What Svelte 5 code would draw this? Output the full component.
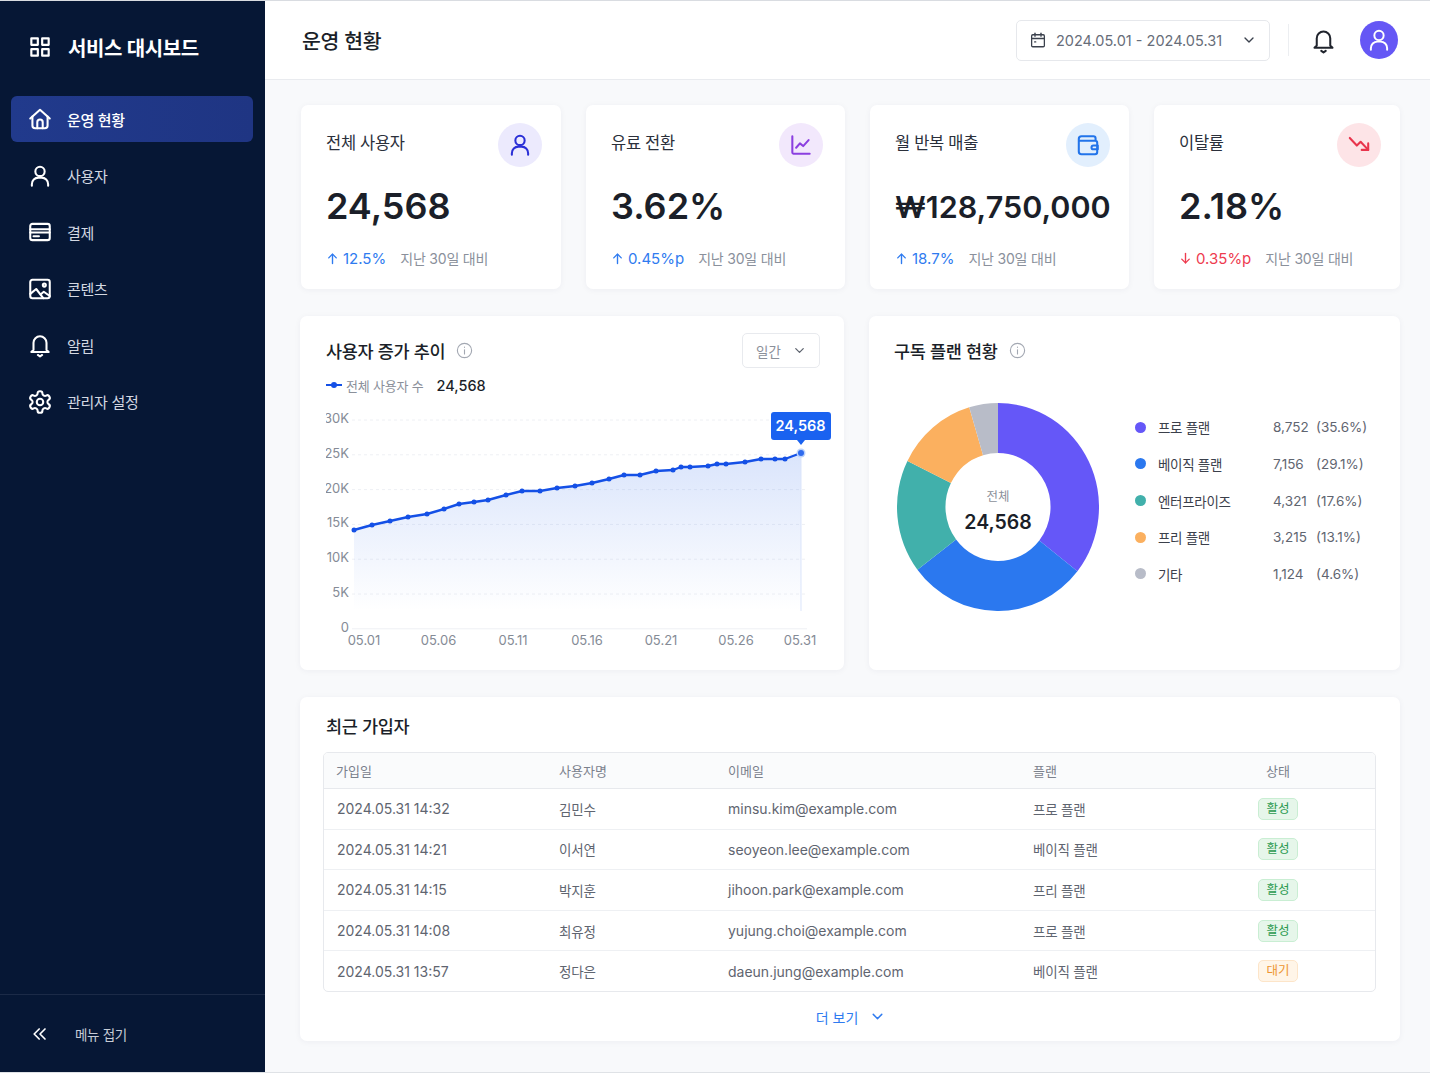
<!--
	Service dashboard
	Sidebar, KPI cards, user growth chart, plan donut and recent signups
-->
<script>
	const icons = {
		grid: ['M4 4h6v6H4z', 'M14 4h6v6h-6z', 'M4 14h6v6H4z', 'M14 14h6v6h-6z'],
		home: ['M3 11.5 12 3.5l9 8', 'M5 9.8V18a2.5 2.5 0 0 0 2.5 2.5h9A2.5 2.5 0 0 0 19 18V9.8', 'M9.5 20.5V15a2.5 2.5 0 0 1 5 0v5.5'],
		user: ['M12 3.5a4.3 4.3 0 1 0 0 8.6 4.3 4.3 0 0 0 0-8.6z', 'M4.5 21v-1.5a6 6 0 0 1 6-6h3a6 6 0 0 1 6 6V21'],
		card: ['M5 4.5h14a2 2 0 0 1 2 2v11a2 2 0 0 1-2 2H5a2 2 0 0 1-2-2v-11a2 2 0 0 1 2-2z', 'M3 9.5h18', 'M3 12.5h18', 'M6 16h5'],
		image: ['M5 3.5h14a2 2 0 0 1 2 2v13a2 2 0 0 1-2 2H5a2 2 0 0 1-2-2v-13a2 2 0 0 1 2-2z', 'M16 7a1.4 1.4 0 1 0 0 2.8A1.4 1.4 0 0 0 16 7z', 'M3 16.5 8.5 12l6.5 8.5', 'M12.5 17l3-2.5 5.5 4'],
		bell: ['M6 16.5V10a6 6 0 0 1 12 0v6.5l2 2H4z', 'M10 21.2 12 22.6l2-1.4'],
		gear: ['M12.22 2h-.44a2 2 0 0 0-2 2v.18a2 2 0 0 1-1 1.73l-.43.25a2 2 0 0 1-2 0l-.15-.08a2 2 0 0 0-2.73.73l-.22.38a2 2 0 0 0 .73 2.73l.15.1a2 2 0 0 1 1 1.72v.51a2 2 0 0 1-1 1.74l-.15.09a2 2 0 0 0-.73 2.73l.22.38a2 2 0 0 0 2.73.73l.15-.08a2 2 0 0 1 2 0l.43.25a2 2 0 0 1 1 1.73V20a2 2 0 0 0 2 2h.44a2 2 0 0 0 2-2v-.18a2 2 0 0 1 1-1.73l.43-.25a2 2 0 0 1 2 0l.15.08a2 2 0 0 0 2.73-.73l.22-.39a2 2 0 0 0-.73-2.73l-.15-.08a2 2 0 0 1-1-1.74v-.5a2 2 0 0 1 1-1.74l.15-.09a2 2 0 0 0 .73-2.73l-.22-.38a2 2 0 0 0-2.73-.73l-.15.08a2 2 0 0 1-2 0l-.43-.25a2 2 0 0 1-1-1.73V4a2 2 0 0 0-2-2z', 'M12 9a3 3 0 1 0 0 6 3 3 0 0 0 0-6z'],
		collapse: ['M11 6 5 12l6 6', 'M18 6l-6 6 6 6'],
		chevron: ['M6 9l6 6 6-6'],
		calendar: ['M5 5h14a1.5 1.5 0 0 1 1.5 1.5v13A1.5 1.5 0 0 1 19 21H5a1.5 1.5 0 0 1-1.500-1.500v-13A1.500 1.500 0 0 1 5 5z', 'M3.500 10h17', 'M8 3v4', 'M16 3v4', 'M7.500 14.500h1.500'],
		trend: ['M4 4v15a1 1 0 0 0 1 1h15', 'M7.500 14.500l3.500-4 3 2.500 5-5.500'],
		wallet: ['M19 8V6a2 2 0 0 0-2-2H6a2.500 2.500 0 0 0-2.500 2.500V18A2.500 2.500 0 0 0 6 20.500h12.500A2 2 0 0 0 20.500 18.500V10a2 2 0 0 0-2-2H3.500', 'M21 12.500h-4a1.700 1.700 0 0 0 0 3.500h4z'],
		down: ['M3.500 5.500l6.500 7 3.500-3.500 7 7.500', 'M20.500 10.500v6h-6'],
		up: ['M12 20V5', 'M6 11l6-6 6 6'],
		dn: ['M12 4v15', 'M6 13l6 6 6-6'],
		info: ['M12 3a9 9 0 1 0 0 18 9 9 0 0 0 0-18z', 'M12 11v5.500', 'M12 7.500v.5']
	};

	const nav = [
		{ icon: 'home', label: '운영 현황', active: true },
		{ icon: 'user', label: '사용자' },
		{ icon: 'card', label: '결제' },
		{ icon: 'image', label: '콘텐츠' },
		{ icon: 'bell', label: '알림' },
		{ icon: 'gear', label: '관리자 설정' }
	];

	const stats = [
		{ label: '전체 사용자', value: '24,568', delta: '12.5%', icon: 'user', tone: 'indigo', inset: 19 },
		{ label: '유료 전환', value: '3.62%', delta: '0.45%p', icon: 'trend', tone: 'purple', inset: 22 },
		{ label: '월 반복 매출', value: '₩128,750,000', delta: '18.7%', icon: 'wallet', tone: 'sky', inset: 19, small: true },
		{ label: '이탈률', value: '2.18%', delta: '0.35%p', icon: 'down', tone: 'rose', inset: 19, bad: true }
	];

	// chart points, in the svg's own pixels
	const points = [
		[28, 125], [46, 120], [64, 116], [82, 112], [101, 109], [118, 104], [133, 99], [148, 97], [162, 95], [180, 90],
		[196, 86], [214, 86], [231, 83], [249, 81], [266, 78], [283, 74], [298, 70], [314, 70], [330, 66], [347, 65],
		[355, 62], [364, 62], [382, 61], [391, 59], [400, 59], [419, 57], [435, 54], [449, 54], [459, 54], [475, 48]
	];
	const linePath = points.map(([x, y], i) => `${i ? 'L' : 'M'}${x} ${y}`).join(' ');
	const areaPath = `${linePath} L475 206 L28 206 Z`;
	const yTicks = ['30K', '25K', '20K', '15K', '10K', '5K', '0'];
	const xTicks = [['05.01', 38], ['05.06', 112.500], ['05.11', 187], ['05.16', 261], ['05.21', 335], ['05.26', 410], ['05.31', 474]];

	const plans = [
		{ name: '프로 플랜', count: '8,752', share: 35.6, color: '#6557f8' },
		{ name: '베이직 플랜', count: '7,156', share: 29.1, color: '#2b78ef' },
		{ name: '엔터프라이즈', count: '4,321', share: 17.6, color: '#41b0ab' },
		{ name: '프리 플랜', count: '3,215', share: 13.1, color: '#fbb05f' },
		{ name: '기타', count: '1,124', share: 4.6, color: '#b8bcc8' }
	];

	function polar(r, pct) {
		const a = (pct / 100) * Math.PI * 2;
		return `${(100 + r * Math.sin(a)).toFixed(2)} ${(100 - r * Math.cos(a)).toFixed(2)}`;
	}

	let running = 0;
	const slices = plans.map((p) => {
		const from = running;
		running += p.share;
		const to = from + p.share;
		const large = p.share > 50 ? 1 : 0;
		return {
			color: p.color,
			d: `M${polar(100, from)} A100 100 0 ${large} 1 ${polar(100, to)} L${polar(52, to)} A52 52 0 ${large} 0 ${polar(52, from)} Z`
		};
	});

	const signups = [
		{ date: '2024.05.31 14:32', name: '김민수', email: 'minsu.kim@example.com', plan: '프로 플랜', status: '활성' },
		{ date: '2024.05.31 14:21', name: '이서연', email: 'seoyeon.lee@example.com', plan: '베이직 플랜', status: '활성' },
		{ date: '2024.05.31 14:15', name: '박지훈', email: 'jihoon.park@example.com', plan: '프리 플랜', status: '활성' },
		{ date: '2024.05.31 14:08', name: '최유정', email: 'yujung.choi@example.com', plan: '프로 플랜', status: '활성' },
		{ date: '2024.05.31 13:57', name: '정다은', email: 'daeun.jung@example.com', plan: '베이직 플랜', status: '대기' }
	];
</script>

{#snippet icon(name, size, width = 2)}
	<svg class="icon" viewBox="0 0 24 24" width={size} height={size} stroke-width={width} aria-hidden="true">
		{#each icons[name] as d}
			<path {d} />
		{/each}
	</svg>
{/snippet}

<div class="shell">
	<aside class="sidebar">
		<div class="brand">
			{@render icon('grid', 26)}
			<span>서비스 대시보드</span>
		</div>
		<nav class="nav">
			{#each nav as item}
				<div class="nav-item" class:active={item.active}>
					{@render icon(item.icon, 26, 1.9)}
					<span>{item.label}</span>
				</div>
			{/each}
		</nav>
		<div class="collapse">
			{@render icon('collapse', 20, 2)}
			<span>메뉴 접기</span>
		</div>
	</aside>

	<div class="page">
		<header class="topbar">
			<h1>운영 현황</h1>
			<div class="date-picker">
				{@render icon('calendar', 18, 1.7)}
				<span>2024.05.01 - 2024.05.31</span>
				{@render icon('chevron', 16, 2)}
			</div>
			<div class="divider"></div>
			<div class="bell">{@render icon('bell', 27, 1.8)}</div>
			<div class="avatar">{@render icon('user', 26, 1.8)}</div>
		</header>

		<main class="content">
			<section class="stats">
				{#each stats as stat}
					<article class="card stat" style="padding-right: {stat.inset}px">
						<div class="stat-head">
							<span class="stat-label">{stat.label}</span>
							<span class="stat-icon {stat.tone}">{@render icon(stat.icon, 26, 1.9)}</span>
						</div>
						<div class="stat-value" class:small={stat.small}>{stat.value}</div>
						<div class="stat-foot">
							<span class="delta" class:bad={stat.bad}>
								{@render icon(stat.bad ? 'dn' : 'up', 15, 2.2)}
								{stat.delta}
							</span>
							<span class="muted">지난 30일 대비</span>
						</div>
					</article>
				{/each}
			</section>

			<section class="charts">
				<article class="card growth">
					<div class="card-head">
						<h2>사용자 증가 추이</h2>
						<span class="info">{@render icon('info', 19, 1.4)}</span>
						<div class="range">
							<span>일간</span>
							{@render icon('chevron', 15, 2)}
						</div>
					</div>
					<div class="legend-line">
						<svg width="16" height="8" viewBox="0 0 16 8" aria-hidden="true">
							<path d="M0 4h16" stroke="#1450e6" stroke-width="2" />
							<circle cx="8" cy="4" r="3" fill="#1450e6" />
						</svg>
						<span class="muted-label">전체 사용자 수</span>
						<strong>24,568</strong>
					</div>
					<svg class="plot" width="506" height="250" viewBox="0 0 506 250" role="img" aria-label="사용자 증가 추이">
						<defs>
							<linearGradient id="area" x1="0" y1="0" x2="0" y2="1">
								<stop offset="0" stop-color="#2563eb" stop-opacity="0.17" />
								<stop offset="1" stop-color="#2563eb" stop-opacity="0" />
							</linearGradient>
						</defs>
						{#each yTicks as tick, i}
							<line x1="26" x2="481" y1={15 + i * 34.8} y2={15 + i * 34.8} class="grid" class:base={i === 6} />
							<text x="23" y={14.500 + i * 34.8} class="axis" text-anchor="end" dominant-baseline="middle">{tick}</text>
						{/each}
						{#each xTicks as [tick, x]}
							<text {x} y="240" class="axis" text-anchor="middle">{tick}</text>
						{/each}
						<path d={areaPath} fill="url(#area)" />
						<line x1="475" x2="475" y1="48" y2="206" stroke="#dbe5fb" />
						<path d={linePath} fill="none" stroke="#1450e6" stroke-width="2.400" stroke-linejoin="round" />
						{#each points.slice(0, -1) as [x, y]}
							<circle cx={x} cy={y} r="2.500" fill="#1450e6" />
						{/each}
						<circle cx="475" cy="48" r="4.500" fill="#bcd3fb" />
						<circle cx="475" cy="48" r="3" fill="#2f6bee" />
						<path d="M448 7h54a3 3 0 0 1 3 3v22a3 3 0 0 1-3 3h-23l-4 5-4-5h-23a3 3 0 0 1-3-3V10a3 3 0 0 1 3-3z" fill="#1a62f0" />
						<text x="474.500" y="26" class="tip" text-anchor="middle">24,568</text>
					</svg>
				</article>

				<article class="card plans">
					<div class="card-head">
						<h2>구독 플랜 현황</h2>
						<span class="info">{@render icon('info', 19, 1.4)}</span>
					</div>
					<div class="plan-body">
						<div class="donut">
							<svg width="202" height="208" viewBox="0 0 200 200" preserveAspectRatio="none" aria-hidden="true">
								{#each slices as slice}
									<path d={slice.d} fill={slice.color} />
								{/each}
							</svg>
							<div class="donut-label">
								<span>전체</span>
								<strong>24,568</strong>
							</div>
						</div>
						<ul class="plan-list">
							{#each plans as plan}
								<li>
									<i style="background: {plan.color}"></i>
									<span class="plan-name">{plan.name}</span>
									<span>{plan.count}</span>
									<span>({plan.share}%)</span>
								</li>
							{/each}
						</ul>
					</div>
				</article>
			</section>

			<article class="card recent">
				<h2>최근 가입자</h2>
				<div class="table-wrap">
					<table>
						<colgroup>
							<col style="width: 223px" />
							<col style="width: 169px" />
							<col style="width: 305px" />
							<col style="width: 160px" />
							<col />
						</colgroup>
						<thead>
							<tr>
								<th>가입일</th>
								<th>사용자명</th>
								<th>이메일</th>
								<th>플랜</th>
								<th class="center">상태</th>
							</tr>
						</thead>
						<tbody>
							{#each signups as row}
								<tr>
									<td>{row.date}</td>
									<td>{row.name}</td>
									<td>{row.email}</td>
									<td>{row.plan}</td>
									<td class="center">
										<span class="badge" class:wait={row.status === '대기'}>{row.status}</span>
									</td>
								</tr>
							{/each}
						</tbody>
					</table>
				</div>
				<div class="more">
					<span>더 보기</span>
					{@render icon('chevron', 17, 2)}
				</div>
			</article>
		</main>
	</div>
</div>

<style>
	:global(body) {
		margin: 0;
		background: #f8f9fb;
	}

	.shell {
		display: flex;
		box-sizing: border-box;
		height: 1073px;
		overflow: hidden;
		border-top: 1px solid #d9dce1;
		border-bottom: 1px solid #dfe2e6;
		font-family: Inter, 'Noto Sans CJK KR', sans-serif;
		color: #1b1f29;
	}

	.icon {
		display: block;
		flex: none;
		fill: none;
		stroke: currentColor;
		stroke-linecap: round;
		stroke-linejoin: round;
	}

	h1,
	h2 {
		margin: 0;
		font-weight: 500;
	}

	/* sidebar */
	.sidebar {
		display: flex;
		flex-direction: column;
		flex: none;
		width: 265px;
		background: #061735;
		color: #fff;
	}

	.brand {
		display: flex;
		align-items: center;
		gap: 15px;
		height: 92px;
		padding: 0 0 0 27px;
		margin-bottom: 3px;
		font-size: 20px;
		font-weight: 600;
		letter-spacing: -0.4px;
	}

	.nav {
		display: flex;
		flex-direction: column;
		gap: 10.500px;
		padding: 0 12px 0 11px;
	}

	.nav-item {
		display: flex;
		align-items: center;
		gap: 14px;
		height: 46px;
		padding-left: 16px;
		border-radius: 6px;
		font-size: 15px;
		color: #d3d8e2;
		letter-spacing: -0.3px;
	}

	.nav-item .icon {
		color: #fff;
	}

	.nav-item.active {
		background: linear-gradient(90deg, #213a8c, #1f3583);
		color: #fff;
		font-weight: 500;
	}

	.collapse {
		display: flex;
		align-items: center;
		gap: 25px;
		margin-top: auto;
		height: 77px;
		padding-left: 30px;
		border-top: 1px solid #1b2a47;
		font-size: 13.500px;
		color: #c7ccd6;
		letter-spacing: -0.3px;
	}

	.collapse .icon {
		color: #fff;
	}

	/* top bar */
	.page {
		flex: 1;
		min-width: 0;
	}

	.topbar {
		display: flex;
		align-items: center;
		box-sizing: border-box;
		height: 79px;
		padding: 0 32px 0 37px;
		background: #fff;
		border-bottom: 1px solid #e9ebef;
	}

	.topbar h1 {
		flex: 1;
		font-size: 20.500px;
		letter-spacing: -0.3px;
	}

	.date-picker {
		display: flex;
		align-items: center;
		box-sizing: border-box;
		width: 254px;
		height: 41px;
		padding: 0 12px;
		border: 1px solid #e6e8ec;
		border-radius: 5px;
		font-size: 14.500px;
		color: #676d79;
	}

	.date-picker span {
		margin: 0 auto 0 9px;
	}

	.date-picker .icon {
		color: #3b414d;
	}

	.divider {
		width: 1px;
		height: 32px;
		margin: 0 11px 0 18px;
		background: #eceef1;
	}

	.bell {
		margin: 0 23px 0 10px;
		color: #20242d;
	}

	.avatar {
		display: flex;
		align-items: center;
		justify-content: center;
		width: 38px;
		height: 38px;
		border-radius: 50%;
		background: #6557f5;
		color: #fff;
	}

	/* content */
	.content {
		display: flex;
		flex-direction: column;
		gap: 27px;
		padding: 25px 30px 0 35px;
	}

	.card {
		box-sizing: border-box;
		background: #fff;
		border-radius: 7px;
		box-shadow: 0 1px 6px rgba(30, 40, 70, 0.05);
	}

	.stats {
		display: grid;
		grid-template-columns: 260px 259px 259px 1fr;
		gap: 25px;
		padding-left: 1px;
	}

	.stat {
		display: flex;
		flex-direction: column;
		height: 184px;
		padding: 18px 19px 0 25px;
	}

	.stat-head {
		display: flex;
		justify-content: space-between;
		height: 44px;
	}

	.stat-label {
		margin-top: 7px;
		font-size: 16.500px;
		color: #2b303b;
		letter-spacing: -0.3px;
	}

	.stat-icon {
		display: flex;
		align-items: center;
		justify-content: center;
		width: 44px;
		height: 44px;
		border-radius: 50%;
	}

	.indigo {
		background: #eceafd;
		color: #2a2fd6;
	}

	.purple {
		background: #f2e8fc;
		color: #8b3fe0;
	}

	.sky {
		background: #e2effd;
		color: #2274ea;
	}

	.rose {
		background: #fde4e7;
		color: #e8344c;
	}

	.stat-value {
		display: flex;
		align-items: center;
		height: 46px;
		margin-top: 16px;
		font-size: 36px;
		font-weight: 600;
	}

	.stat-value.small {
		font-size: 30.500px;
	}

	.stat-foot {
		display: flex;
		align-items: center;
		gap: 14px;
		margin-top: 18px;
		height: 22px;
	}

	.delta {
		display: flex;
		align-items: center;
		gap: 3px;
		font-size: 15px;
		color: #2f7bf0;
	}

	.delta .icon {
		margin-left: -1px;
	}

	.delta.bad {
		color: #ee3b4f;
	}

	.muted {
		font-size: 14px;
		color: #8a909b;
		letter-spacing: -0.2px;
	}

	/* charts */
	.charts {
		display: grid;
		grid-template-columns: 544px 531px;
		gap: 25px;
	}

	.growth,
	.plans {
		height: 354px;
	}

	.growth {
		padding: 17px 24px 0 26px;
	}

	.card-head {
		display: flex;
		align-items: center;
		height: 35px;
	}

	.card-head h2,
	.recent h2 {
		font-size: 17.500px;
		letter-spacing: -0.3px;
	}

	.info {
		margin-left: 10px;
		color: #a3a8b2;
	}

	.range {
		display: flex;
		align-items: center;
		justify-content: space-between;
		box-sizing: border-box;
		width: 78px;
		height: 35px;
		margin-left: auto;
		padding: 0 12px 0 13px;
		border: 1px solid #e8eaee;
		border-radius: 5px;
		font-size: 13.500px;
		color: #8b909a;
	}

	.range .icon {
		color: #5d636e;
	}

	.legend-line {
		display: flex;
		align-items: center;
		height: 34px;
		font-size: 13px;
	}

	.muted-label {
		margin-left: 4px;
		color: #8b909a;
		letter-spacing: -0.2px;
	}

	.legend-line strong {
		margin-left: 13px;
		font-size: 14.500px;
		font-weight: 500;
	}

	.plot {
		display: block;
		margin-top: 3px;
	}

	.grid {
		stroke: #eef0f4;
		stroke-dasharray: 3 3;
	}

	.grid.base {
		stroke-dasharray: none;
	}

	.axis {
		font-size: 13px;
		fill: #858b96;
	}

	.tip {
		font-size: 14.500px;
		font-weight: 600;
		fill: #fff;
	}

	.plans {
		padding: 17px 28px 0 25px;
	}

	.plan-body {
		display: flex;
		align-items: center;
		gap: 36px;
		margin: 35px 0 0 3px;
	}

	.donut {
		position: relative;
		width: 202px;
		height: 208px;
	}

	.donut svg {
		display: block;
	}

	.donut-label {
		position: absolute;
		inset: 0;
		display: flex;
		flex-direction: column;
		align-items: center;
		justify-content: center;
		gap: 5px;
		padding-top: 6px;
		box-sizing: border-box;
	}

	.donut-label span {
		font-size: 12.500px;
		color: #8b909a;
	}

	.donut-label strong {
		font-size: 19.500px;
		font-weight: 600;
		line-height: 24px;
	}

	.plan-list {
		display: flex;
		flex-direction: column;
		gap: 14.700px;
		margin: 0 0 13px;
		padding: 0;
		list-style: none;
	}

	.plan-list li {
		display: grid;
		grid-template-columns: 11px 127px 43px auto;
		column-gap: 0;
		align-items: center;
		height: 22px;
		font-size: 13.500px;
		color: #5f6570;
	}

	.plan-list i {
		width: 11px;
		height: 11px;
		border-radius: 50%;
	}

	.plan-name {
		padding-left: 12px;
		color: #3b404b;
		letter-spacing: -0.3px;
	}

	/* recent signups */
	.recent {
		height: 344px;
		padding: 18px 24px 0 23px;
	}

	.recent h2 {
		height: 37px;
		padding-left: 3px;
		line-height: 24px;
	}

	.table-wrap {
		border: 1px solid #e7e9ed;
		border-radius: 5px;
		overflow: hidden;
	}

	table {
		width: 100%;
		border-collapse: collapse;
		table-layout: fixed;
		font-size: 14px;
		color: #5f6570;
	}

	th {
		height: 35px;
		padding: 0 0 0 12px;
		background: #fafbfc;
		font-size: 13px;
		font-weight: 400;
		text-align: left;
		color: #7b818c;
		border-bottom: 1px solid #e7e9ed;
	}

	td {
		height: 39.600px;
		padding: 0 0 0 12px;
		border-bottom: 1px solid #eef0f3;
	}

	td:first-child {
		padding-left: 13px;
		font-size: 14px;
	}

	td:nth-child(2),
	td:nth-child(4) {
		font-size: 13.500px;
		letter-spacing: -0.2px;
	}

	tbody tr:last-child td {
		border-bottom: 0;
	}

	th.center,
	td.center {
		padding: 0;
		text-align: center;
	}

	.badge {
		display: inline-block;
		box-sizing: border-box;
		width: 40px;
		height: 22px;
		border: 1px solid #c9eed3;
		border-radius: 5px;
		background: #e6f6ea;
		font-size: 12.500px;
		line-height: 20px;
		color: #2b9a4f;
		vertical-align: middle;
	}

	.badge.wait {
		border-color: #fde5c9;
		background: #fff5e8;
		color: #ee9430;
	}

	.more {
		display: flex;
		align-items: center;
		justify-content: center;
		gap: 11px;
		height: 50px;
		padding-left: 3px;
		font-size: 14px;
		color: #2f7bf0;
	}
</style>
